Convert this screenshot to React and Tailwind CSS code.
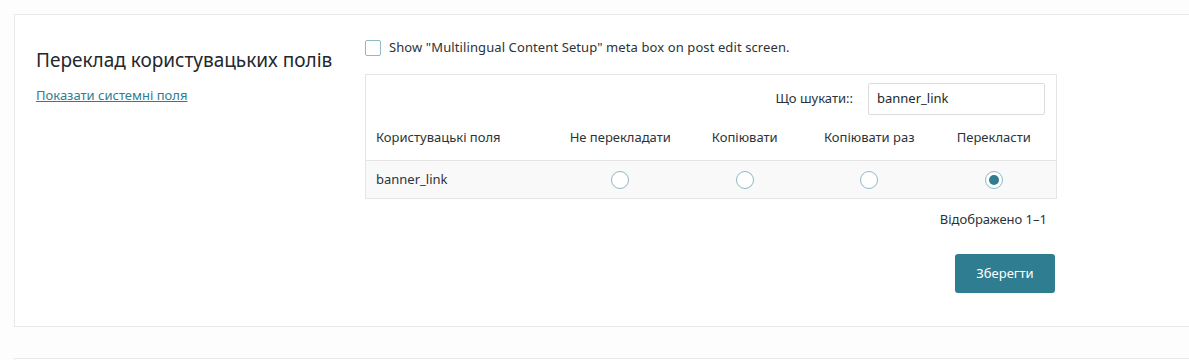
const columns = ['Не перекладати', 'Копіювати', 'Копіювати раз', 'Перекласти'];

const Radio = ({ checked }) => (
  <span className="inline-flex w-[18px] h-[18px] rounded-full border border-[#8fb9c4] bg-white items-center justify-center">
    {checked && <span className="w-[10px] h-[10px] rounded-full bg-[#2e7d90]" />}
  </span>
);

const App = () => {
  return (
    <div
      className="w-[1189px] h-[360px] overflow-hidden bg-[#fdfdfd] pt-[14px] pl-[14px] text-[13px] text-[#2c3338]"
      style={{ fontFamily: '"Noto Sans", "Open Sans", sans-serif' }}
    >
      <div className="w-[1200px] h-[313px] bg-white border border-[#e8e8e8] flex">
        <div className="w-[350px] pl-[21px] pt-[33px] shrink-0">
          <h2 className="text-[19px] leading-[24px] text-[#23282d]">Переклад користувацьких полів</h2>
          <a href="#" className="block mt-[14px] text-[13px] leading-[18px] text-[#2e7d90] underline">
            Показати системні поля
          </a>
        </div>

        <div className="pt-[24px] w-[692px]">
          <label className="flex items-center gap-[8px] h-[17px]">
            <span className="w-[16px] h-[16px] border border-[#8fb9c4] rounded-[2px] bg-white" />
            <span className="leading-[17px] tracking-[0.1px]">Show "Multilingual Content Setup" meta box on post edit screen.</span>
          </label>

          <div className="mt-[18px] border border-[#e5e5e5]">
            <div className="flex items-center justify-end gap-[15px] pt-[8px] pr-[11px]">
              <span>Що шукати::</span>
              <div className="w-[177px] h-[32px] border border-[#dcdcdc] rounded-[2px] px-[8px] flex items-center text-[#23282d]">
                banner_link
              </div>
            </div>

            <div className="flex items-center h-[46px] border-b border-[#e5e5e5]">
              <div className="w-[192px] pl-[10px]">Користувацькі поля</div>
              {columns.map((c) => (
                <div key={c} className="w-[124.5px] text-center">{c}</div>
              ))}
            </div>

            <div className="flex items-center h-[37px] bg-[#f9f9f9]">
              <div className="w-[192px] pl-[10px]">banner_link</div>
              {columns.map((c, i) => (
                <div key={c} className="w-[124.5px] flex justify-center">
                  <Radio checked={i === 3} />
                </div>
              ))}
            </div>
          </div>

          <div className="text-right pr-[10px] mt-[11px] leading-[18px]">Відображено 1–1</div>

          <div className="flex justify-end pr-[2px] mt-[26px]">
            <button className="w-[100px] h-[39px] rounded-[3px] bg-[#2e7d90] text-white text-[13px]">
              Зберегти
            </button>
          </div>
        </div>
      </div>

      <div className="w-[1200px] h-[40px] mt-[31px] bg-white border border-[#e8e8e8]" />
    </div>
  );
};

export default App;
